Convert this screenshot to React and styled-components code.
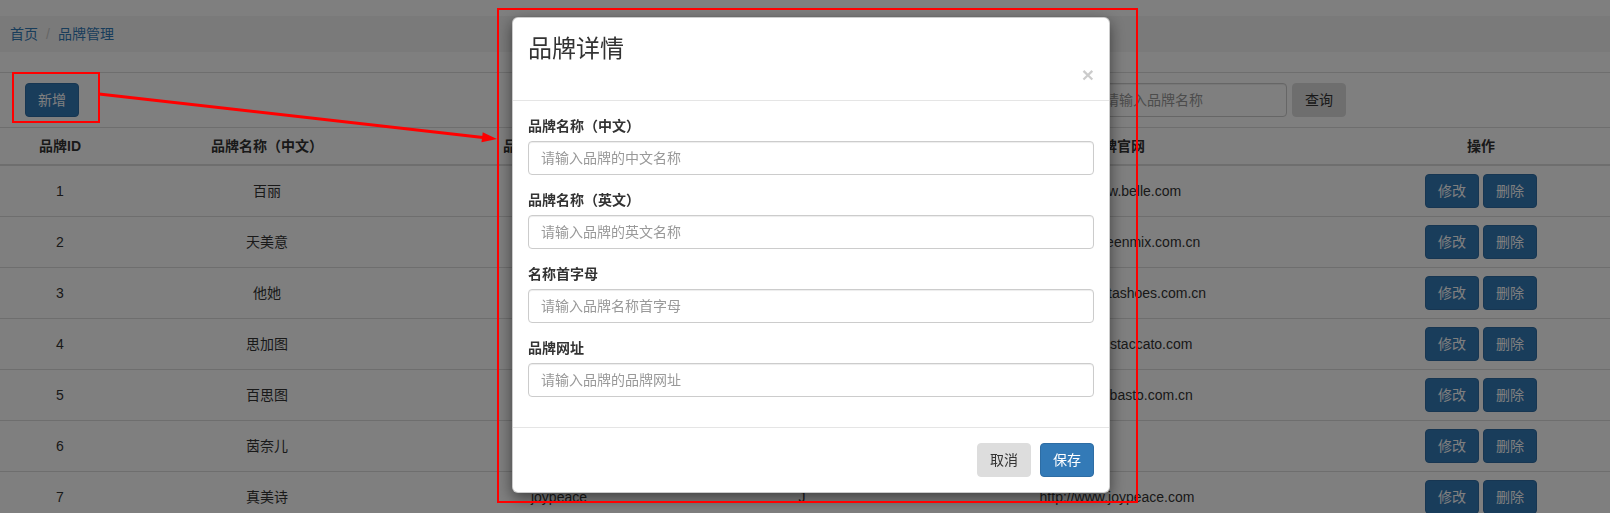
import React from 'react'
import styled, { createGlobalStyle } from 'styled-components'

const GlobalStyle = createGlobalStyle`
    html, body {
        margin: 0;
        padding: 0;
        background: #fff;
        overflow: hidden;
    }
    body {
        font-family: "Liberation Sans", "Noto Sans CJK SC", sans-serif;
        font-size: 14px;
        line-height: 20px;
        color: #333;
    }
    * {
        box-sizing: border-box;
    }
`;

const brands = [
    { id: 1, name: '百丽', en: 'belle', letter: 'B', url: 'http://www.belle.com' },
    { id: 2, name: '天美意', en: 'teenmix', letter: 'T', url: 'http://www.teenmix.com.cn' },
    { id: 3, name: '他她', en: 'tata', letter: 'T', url: 'http://www.tatashoes.com.cn' },
    { id: 4, name: '思加图', en: 'staccato', letter: 'S', url: 'http://www.staccato.com' },
    { id: 5, name: '百思图', en: 'basto', letter: 'B', url: 'http://www.basto.com.cn' },
    { id: 6, name: '茵奈儿', en: 'innet', letter: 'Y', url: '' },
    { id: 7, name: '真美诗', en: 'joypeace', letter: 'J', url: 'http://www.joypeace.com' },
];

const columns = [
    { title: '品牌ID', width: 120 },
    { title: '品牌名称（中文）', width: 294 },
    { title: '品牌名称（英文）', width: 290 },
    { title: '品牌首字母', width: 196 },
    { title: '品牌官网', width: 434 },
    { title: '操作', width: 276, shift: true },
];

const fields = [
    { label: '品牌名称（中文）', placeholder: '请输入品牌的中文名称' },
    { label: '品牌名称（英文）', placeholder: '请输入品牌的英文名称' },
    { label: '名称首字母', placeholder: '请输入品牌名称首字母' },
    { label: '品牌网址', placeholder: '请输入品牌的品牌网址' },
];

export default function App() {
    return (
        <>
            <GlobalStyle />
            <Page>
                <Breadcrumb>
                    <Crumb>首页</Crumb>
                    <Sep>/</Sep>
                    <Crumb>品牌管理</Crumb>
                </Breadcrumb>
                <Toolbar>
                    <Button variant="primary">新增</Button>
                    <SearchForm>
                        <SearchInput placeholder="请输入品牌名称" />
                        <Button>查询</Button>
                    </SearchForm>
                </Toolbar>
                <Table>
                    <colgroup>
                        {columns.map(c => <col key={c.title} style={{ width: c.width }} />)}
                    </colgroup>
                    <thead>
                        <tr>
                            {columns.map(c => <Th key={c.title} shift={c.shift}>{c.title}</Th>)}
                        </tr>
                    </thead>
                    <tbody>
                        {brands.map(b => (
                            <tr key={b.id}>
                                <Td>{b.id}</Td>
                                <Td>{b.name}</Td>
                                <Td>{b.en}</Td>
                                <Td>{b.letter}</Td>
                                <Td>{b.url}</Td>
                                <Td shift>
                                    <Actions>
                                        <Button variant="primary">修改</Button>
                                        <Button variant="primary">删除</Button>
                                    </Actions>
                                </Td>
                            </tr>
                        ))}
                    </tbody>
                </Table>
            </Page>

            <Backdrop>
                <Dialog>
                    <ModalHeader>
                        <ModalTitle>品牌详情</ModalTitle>
                        <CloseRow>
                            <Close>×</Close>
                        </CloseRow>
                    </ModalHeader>
                    <ModalBody>
                        {fields.map(f => (
                            <FormGroup key={f.label}>
                                <Label>{f.label}</Label>
                                <Input placeholder={f.placeholder} />
                            </FormGroup>
                        ))}
                    </ModalBody>
                    <ModalFooter>
                        <Button>取消</Button>
                        <Button variant="primary">保存</Button>
                    </ModalFooter>
                </Dialog>
            </Backdrop>

            <Annotation width="1610" height="513" viewBox="0 0 1610 513">
                <rect x="13" y="73" width="86" height="49" fill="none" stroke="#ff0000" strokeWidth="2" />
                <rect x="498" y="9" width="639" height="493" fill="none" stroke="#ff0000" strokeWidth="2" />
                <line x1="99" y1="94" x2="483" y2="137.4" stroke="#ff0000" strokeWidth="3" />
                <polygon points="497,139 482.7,132.3 481.5,142.3" fill="#ff0000" />
            </Annotation>
        </>
    )
}

const Page = styled.div`
    padding-top: 16px;
`;

const Breadcrumb = styled.div`
    display: flex;
    align-items: center;
    background: #f5f5f5;
    padding: 8px 10px;
    margin-bottom: 20px;
`;

const Crumb = styled.a`
    color: #337ab7;
    text-decoration: none;
`;

const Sep = styled.span`
    color: #ccc;
    padding: 0 8px;
`;

const Toolbar = styled.div`
    display: flex;
    justify-content: space-between;
    align-items: center;
    border-top: 1px solid #ddd;
    padding: 10px 264px 10px 25px;
`;

const SearchForm = styled.div`
    display: flex;
    gap: 5px;
`;

const Button = styled.button`
    height: 34px;
    padding: 6px 12px;
    font-family: inherit;
    font-size: 14px;
    line-height: 20px;
    border-radius: 4px;
    border: 1px solid ${props => props.variant === 'primary' ? '#2e6da4' : '#ddd'};
    background: ${props => props.variant === 'primary' ? '#337ab7' : '#ddd'};
    color: ${props => props.variant === 'primary' ? '#fff' : '#333'};
    white-space: nowrap;
`;

const SearchInput = styled.input`
    width: 195px;
    height: 34px;
    padding: 6px 12px;
    font-family: inherit;
    font-size: 14px;
    border: 1px solid #ccc;
    border-radius: 4px;
    box-shadow: inset 0 1px 1px rgba(0,0,0,.075);
    &::placeholder { color: #999; }
`;

const Table = styled.table`
    width: 1610px;
    table-layout: fixed;
    border-collapse: collapse;
`;

const Th = styled.th`
    padding: 8px;
    padding-left: ${props => props.shift ? '26px' : '8px'};
    line-height: 20px;
    text-align: center;
    font-weight: bold;
    border-top: 1px solid #ddd;
    border-bottom: 2px solid #ddd;
    white-space: nowrap;
`;

const Td = styled.td`
    padding: 8px;
    padding-left: ${props => props.shift ? '26px' : '8px'};
    line-height: 20px;
    height: 51px;
    text-align: center;
    vertical-align: middle;
    border-top: 1px solid #ddd;
    white-space: nowrap;
`;

const Actions = styled.div`
    display: flex;
    justify-content: center;
    gap: 4px;
`;

const Backdrop = styled.div`
    position: fixed;
    inset: 0;
    background: rgba(0,0,0,.5);
    padding: 17px 0 0 512px;
`;

const Dialog = styled.div`
    width: 598px;
    background: #fff;
    border: 1px solid rgba(0,0,0,.2);
    border-radius: 6px;
    box-shadow: 0 5px 15px rgba(0,0,0,.5);
`;

const ModalHeader = styled.div`
    padding: 18px 15px 15px;
    border-bottom: 1px solid #e5e5e5;
`;

const ModalTitle = styled.h3`
    margin: 0;
    font-size: 24px;
    line-height: 26px;
    font-weight: 400;
    color: #333;
`;

const CloseRow = styled.div`
    display: flex;
    justify-content: flex-end;
    margin-top: 2px;
`;

const Close = styled.span`
    font-size: 21px;
    line-height: 21px;
    font-weight: bold;
    color: #000;
    opacity: .2;
    font-family: "Liberation Sans", sans-serif;
`;

const ModalBody = styled.div`
    padding: 15px 15px 15px;
`;

const FormGroup = styled.div`
    margin-bottom: 15px;
`;

const Label = styled.label`
    display: block;
    font-weight: bold;
    margin-bottom: 5px;
`;

const Input = styled.input`
    display: block;
    width: 100%;
    height: 34px;
    padding: 6px 12px;
    font-family: inherit;
    font-size: 14px;
    border: 1px solid #ccc;
    border-radius: 4px;
    box-shadow: inset 0 1px 1px rgba(0,0,0,.075);
    &::placeholder { color: #999; }
`;

const ModalFooter = styled.div`
    display: flex;
    justify-content: flex-end;
    gap: 9px;
    padding: 15px;
    border-top: 1px solid #e5e5e5;
`;

const Annotation = styled.svg`
    position: fixed;
    left: 0;
    top: 0;
    pointer-events: none;
`;
